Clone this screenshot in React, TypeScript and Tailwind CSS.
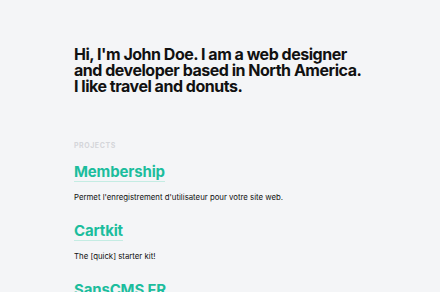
export default function App() {
  const projects = [
    { name: "Membership", desc: "Permet l'enregistrement d'utilisateur pour votre site web." },
    { name: "Cartkit", desc: "The [quick] starter kit!" },
    { name: "SansCMS FR", desc: "" },
  ];
  return (
    <div className="w-[440px] h-[292px] overflow-hidden bg-[#f4f5f7] [font-family:Inter,'Noto_Sans',sans-serif]">
      <div className="pl-[74px] pt-[46px]">
        <h1 className="text-[16px] leading-[16px] font-bold tracking-[-0.03em] text-[#111] w-[290px]">
          Hi, I'm John Doe. I am a web designer and developer based in North America. I like travel and donuts.
        </h1>
        <div className="mt-[47px] text-[7px] font-bold tracking-[0.08em] text-[#d4d6da] uppercase">Projects</div>
        <div className="mt-[7px] flex flex-col">
          {projects.map((p) => (
            <div key={p.name} className="mb-[16px]">
              <span className="inline-block text-[15px] leading-[18px] font-bold tracking-[-0.01em] text-[#1cbd9d] border-b border-[#c4ece3]">
                {p.name}
              </span>
              {p.desc && <p className="mt-[9px] text-[7.8px] leading-[10px] text-[#111]">{p.desc}</p>}
            </div>
          ))}
        </div>
      </div>
    </div>
  );
}
